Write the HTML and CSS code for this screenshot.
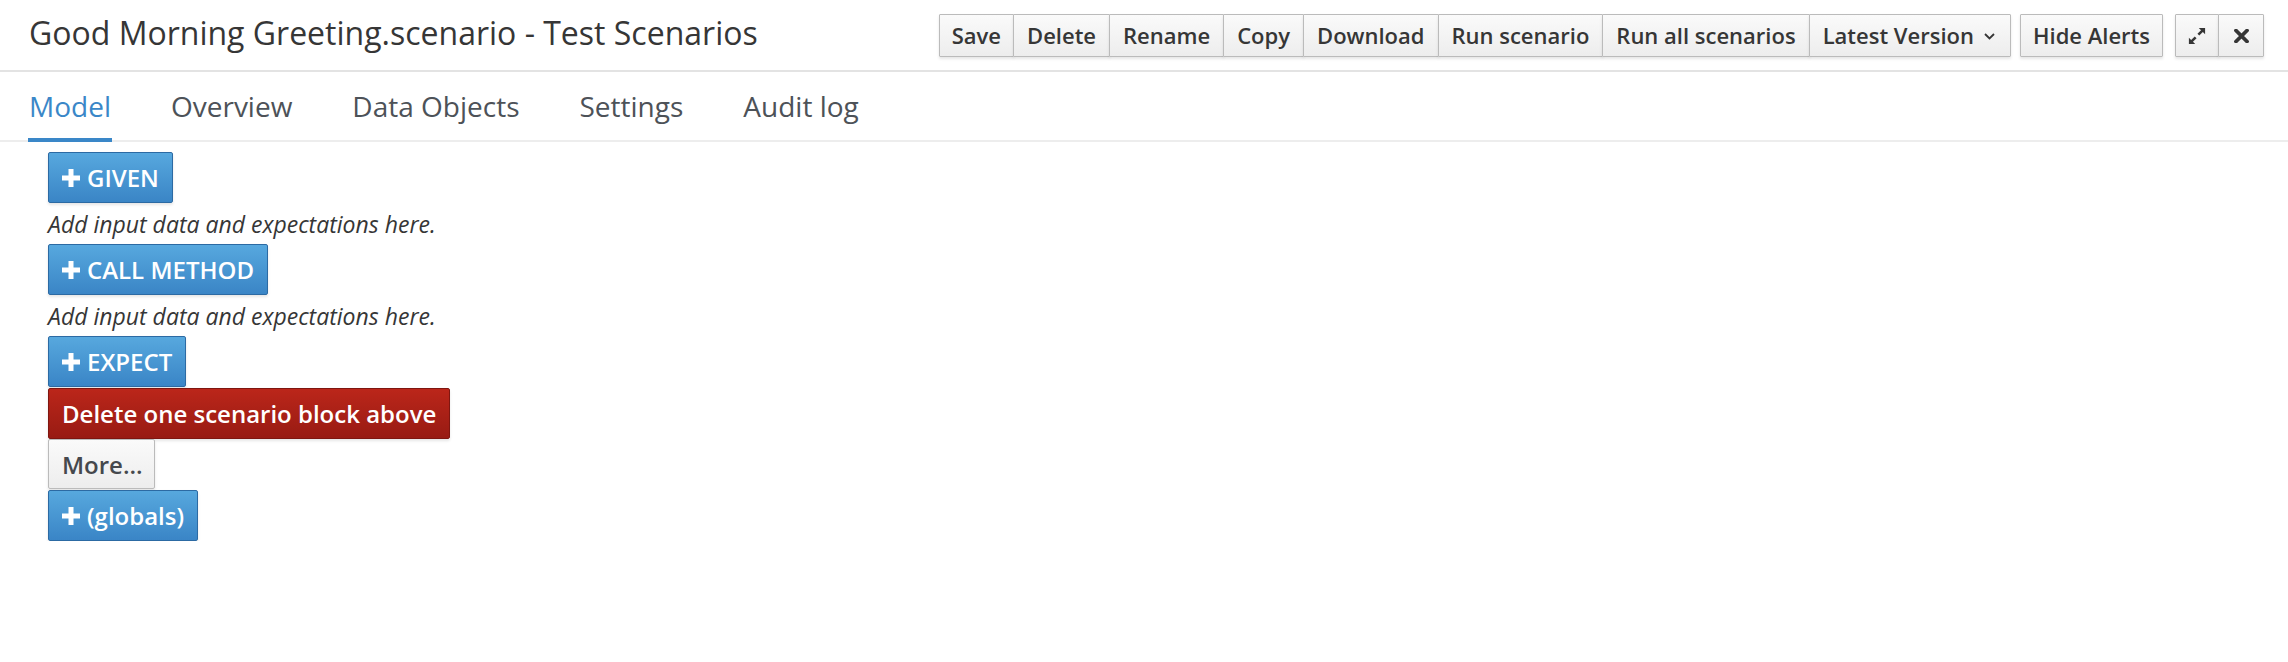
FILE: index.html
```html
<!DOCTYPE html>
<html>
<head>
<meta charset="utf-8">
<link rel="stylesheet" href="styles.css">
</head>
<body>
<div class="header">
  <h1 class="title">Good Morning Greeting.scenario - Test Scenarios</h1>
  <div class="toolbar">
    <div class="btn-group">
      <button class="btn">Save</button>
      <button class="btn">Delete</button>
      <button class="btn">Rename</button>
      <button class="btn">Copy</button>
      <button class="btn">Download</button>
      <button class="btn">Run scenario</button>
      <button class="btn">Run all scenarios</button>
      <button class="btn">Latest Version <svg class="caret" width="11" height="7" viewBox="0 0 11 7"><polyline points="1,1 5.5,5.5 10,1" fill="none" stroke="#363636" stroke-width="1.8"/></svg></button>
    </div>
    <div class="btn-group">
      <button class="btn">Hide Alerts</button>
    </div>
    <div class="btn-group">
      <button class="btn icon-btn expand"><svg width="20" height="20" viewBox="0 0 20 20"><polygon points="12,1 19,1 19,8 16.5,5.5 12.5,9.5 10.5,7.5 14.5,3.5" fill="#363636"/><polygon points="8,19 1,19 1,12 3.5,14.5 7.5,10.5 9.5,12.5 5.5,16.5" fill="#363636"/></svg></button>
      <button class="btn icon-btn close"><svg width="15" height="14" viewBox="0 0 15 14"><path d="M2 1.5 L13 12.5 M13 1.5 L2 12.5" stroke="#363636" stroke-width="3.8" stroke-linecap="round"/></svg></button>
    </div>
  </div>
</div>
<ul class="tabs">
  <li class="tab active">Model</li>
  <li class="tab">Overview</li>
  <li class="tab">Data Objects</li>
  <li class="tab">Settings</li>
  <li class="tab">Audit log</li>
</ul>
<div class="content">
  <button class="pbtn primary"><svg class="plus" width="18" height="18" viewBox="0 0 18 18"><rect x="6.5" y="0" width="5" height="18" fill="#fff"/><rect x="0" y="6.5" width="18" height="5" fill="#fff"/></svg>GIVEN</button>
  <p class="hint">Add input data and expectations here.</p>
  <button class="pbtn primary"><svg class="plus" width="18" height="18" viewBox="0 0 18 18"><rect x="6.5" y="0" width="5" height="18" fill="#fff"/><rect x="0" y="6.5" width="18" height="5" fill="#fff"/></svg>CALL METHOD</button>
  <p class="hint">Add input data and expectations here.</p>
  <button class="pbtn primary"><svg class="plus" width="18" height="18" viewBox="0 0 18 18"><rect x="6.5" y="0" width="5" height="18" fill="#fff"/><rect x="0" y="6.5" width="18" height="5" fill="#fff"/></svg>EXPECT</button>
  <button class="pbtn danger">Delete one scenario block above</button>
  <button class="pbtn default">More...</button>
  <button class="pbtn primary"><svg class="plus" width="18" height="18" viewBox="0 0 18 18"><rect x="6.5" y="0" width="5" height="18" fill="#fff"/><rect x="0" y="6.5" width="18" height="5" fill="#fff"/></svg>(globals)</button>
</div>
</body>
</html>
```

FILE: styles.css
```css
* { box-sizing: border-box; }
html, body { margin: 0; padding: 0; background: #fff; }
body { font-family: "Open Sans", "Liberation Sans", sans-serif; color: #363636; }

.header {
  height: 72px;
  display: flex;
  justify-content: space-between;
  align-items: flex-start;
  padding: 0 24px 0 29px;
  border-bottom: 2px solid #e3e3e3;
}
.title {
  margin: 17px 0 0 0;
  font-size: 32px;
  line-height: 32px;
  font-weight: 400;
  color: #363636;
  white-space: nowrap;
}
.toolbar {
  display: flex;
  margin-top: 14px;
}
.btn-group { display: flex; margin-left: 9px; }
.btn-group + .btn-group + .btn-group { margin-left: 12px; }
.btn {
  height: 43px;
  padding: 0 13px;
  margin: 0;
  margin-left: -1px;
  font-family: "Open Sans", "Liberation Sans", sans-serif;
  font-size: 22px;
  font-weight: 600;
  line-height: 41px;
  color: #363636;
  background: linear-gradient(to bottom, #fafafa 0%, #ededed 100%);
  border: 1px solid #bbbbbb;
  border-radius: 1px;
  box-shadow: 0 2px 3px rgba(3, 3, 3, 0.1);
  white-space: nowrap;
  display: flex;
  align-items: center;
}
.btn:first-child { margin-left: 0; padding: 0 12px; }
.caret { margin-left: 10px; margin-right: 2px; margin-top: 2px; }
.icon-btn { justify-content: center; padding: 0; }
.expand { width: 44px; }
.close { width: 46px; }

.tabs {
  list-style: none;
  margin: 0;
  padding: 0 0 0 28px;
  display: flex;
  gap: 58px;
  border-bottom: 2px solid #ededed;
}
.tab {
  font-size: 28px;
  line-height: 36px;
  padding: 15.5px 1px 14.5px;
  border-bottom: 4px solid transparent;
  margin-bottom: -2px;
  color: #4d5258;
  white-space: nowrap;
}
.tab.active { color: #3a87c8; border-bottom-color: #3a87c8; }

.content {
  display: flex;
  flex-direction: column;
  align-items: flex-start;
  padding: 10px 0 0 48px;
}
.pbtn {
  height: 51px;
  margin: 0;
  padding: 0 13px 0 13px;
  font-family: "Open Sans", "Liberation Sans", sans-serif;
  font-size: 24px;
  font-weight: 600;
  line-height: 49px;
  border: 1px solid;
  border-radius: 2px;
  display: flex;
  align-items: center;
  white-space: nowrap;
  box-shadow: 0 2px 3px rgba(3, 3, 3, 0.1);
}
.primary {
  color: #fff;
  background: linear-gradient(to bottom, #57a8de 0%, #3a85c6 100%);
  border-color: #2c6aa3;
}
.danger {
  color: #fff;
  background: linear-gradient(to bottom, #bb261a 0%, #981b13 100%);
  border-color: #7f1610;
  margin-top: 1px;
}
.default {
  color: #45484d;
  height: 50px;
  padding: 0 11px 0 13px;
  background: linear-gradient(to bottom, #fafafa 0%, #ededed 100%);
  border-color: #bbbbbb;
  margin-bottom: 1px;
}
.plus { margin-right: 7px; margin-top: 1px; }
.hint {
  margin: 0;
  height: 41px;
  padding-top: 1px;
  font-size: 23px;
  line-height: 41px;
  font-style: italic;
  color: #363636;
  white-space: nowrap;
}
```
